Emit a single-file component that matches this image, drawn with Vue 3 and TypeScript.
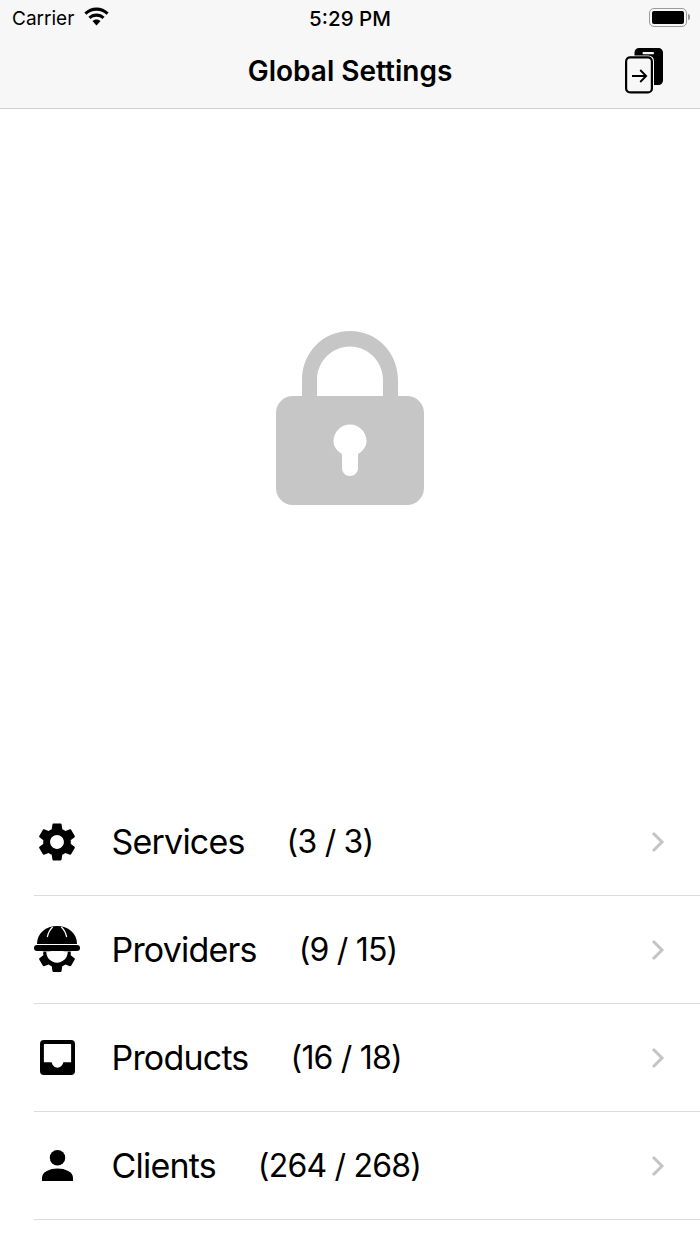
<template>
  <div class="page">
    <header class="topbar">
      <div class="status">
        <div class="status-left">
          <span>Carrier</span>
          <svg class="wifi" viewBox="1 0 24 18" width="25" height="18.700">
            <path d="M13 3.600c3.700 0 7.100 1.400 9.700 3.800l2-2.100C21.500 2.300 17.400.5 13 .5S4.500 2.300 1.300 5.300l2 2.100C5.900 5 9.300 3.600 13 3.600z" />
            <path d="M13 9.300c2.200 0 4.200.8 5.700 2.200l2.100-2.100C18.700 7.500 16 6.300 13 6.300s-5.700 1.200-7.800 3.100l2.100 2.100c1.500-1.400 3.500-2.200 5.700-2.200z" />
            <path d="M13 12.100c-1.500 0-2.900.6-3.900 1.500L13 17.700l3.900-4.100c-1-.9-2.400-1.500-3.900-1.500z" />
          </svg>
        </div>
        <span class="clock">5:29 PM</span>
        <div class="battery">
          <span class="battery-shell"><span class="battery-fill"></span></span>
          <span class="battery-tip"></span>
        </div>
      </div>
      <div class="navbar">
        <h1>Global Settings</h1>
        <svg class="switch-icon" viewBox="0 0 38 46" width="38" height="46">
          <path d="M14 0h19.500A4.500 4.500 0 0 1 38 4.500v28a4.500 4.500 0 0 1-4.500 4.500H29V13a5.500 5.500 0 0 0-5.500-5.500H9.500V4.500A4.500 4.500 0 0 1 14 0z" />
          <rect x="17.500" y="4" width="11.500" height="2.200" rx="1" fill="#f7f7f7" />
          <rect x="1.100" y="9.400" width="25.800" height="35" rx="4" fill="#f7f7f7" stroke="#000" stroke-width="2.200" />
          <path d="M7 28h14M15.200 22l6 6-6 6" fill="none" stroke="#000" stroke-width="1.800" />
        </svg>
      </div>
    </header>

    <section class="hero">
      <svg viewBox="0 0 148 174" width="148" height="174">
        <path
          fill-rule="evenodd"
          d="M26 65V49C26 21.500 47 0 74 0s48 21.500 48 49v16h9c9.500 0 17 7.500 17 17v75c0 9.500-7.500 17-17 17H17c-9.500 0-17-7.500-17-17V82c0-9.500 7.500-17 17-17h9zm15 0h66V49c0-18.500-14.800-33.500-33-33.500S41 30.500 41 49v16zM66 123v14c0 4.500 3.500 8 8 8s8-3.500 8-8v-14c5-3 8.500-7.500 8.500-13 0-9-7.500-16.500-16.500-16.500S57.500 101 57.500 110c0 5.500 3.500 10 8.500 13z"
        />
      </svg>
    </section>

    <ul class="menu">
      <li v-for="row in rows" :key="row.label" class="row">
        <span class="row-icon">
          <svg v-if="row.icon === 'gear'" viewBox="0 0 24 24" width="46" height="46">
            <path :d="gearPath" />
          </svg>
          <svg v-else-if="row.icon === 'worker'" viewBox="0 0 46 48" width="46" height="48">
            <clipPath id="gear-half"><rect x="0" y="25.500" width="46" height="23" /></clipPath>
            <g clip-path="url(#gear-half)">
              <path :d="gearPath" transform="translate(0 4.500) scale(1.917)" />
              <circle cx="23" cy="26" r="10.700" fill="#fff" />
            </g>
            <path d="M3 18C3 7 12 0 23 0s20 7 20 18z" />
            <path d="M13.300 11C14.300 6.500 16 3.500 18.700 1M32.700 11C31.700 6.500 30 3.500 27.300 1" fill="none" stroke="#fff" stroke-width="1.200" />
            <rect x="0" y="19" width="46" height="6" rx="3" />
          </svg>
          <svg v-else-if="row.icon === 'inbox'" viewBox="0 0 36 36" width="35" height="35">
            <path fill-rule="evenodd" d="M4 0h28a4 4 0 0 1 4 4v28a4 4 0 0 1-4 4H4a4 4 0 0 1-4-4V4a4 4 0 0 1 4-4zm.5 4a.5.5 0 0 0-.5.5V23h8c.5 3 3 5.500 6 5.500s5.500-2.500 6-5.500h8V4.500a.5.500 0 0 0-.5-.5z" />
          </svg>
          <svg v-else viewBox="0 0 32 32" width="31" height="31">
            <circle cx="16" cy="8" r="8" />
            <path d="M0 32v-3.500C0 22.500 8 19 16 19s16 3.500 16 9.500V32z" />
          </svg>
        </span>
        <span class="label">{{ row.label }}</span>
        <span class="count">{{ row.count }}</span>
        <svg class="chevron" viewBox="0 0 14 22" width="14" height="22">
          <path d="M2 2l9 9-9 9" fill="none" stroke="#c4c4c6" stroke-width="3" />
        </svg>
      </li>
    </ul>
  </div>
</template>

<script setup lang="ts">
type Row = { label: string; count: string; icon: 'gear' | 'worker' | 'inbox' | 'person' }

const gearPath =
  'M19.140 12.940c.04-.3.06-.61.06-.94 0-.32-.02-.64-.07-.94l2.030-1.580c.18-.14.23-.41.12-.61l-1.920-3.320c-.12-.22-.37-.29-.59-.22l-2.390.96c-.5-.38-1.030-.7-1.620-.94l-.36-2.540c-.04-.24-.24-.41-.48-.41h-3.840c-.24 0-.43.17-.47.41l-.36 2.540c-.59.24-1.130.57-1.620.94l-2.390-.96c-.22-.08-.47 0-.59.22L2.740 8.870c-.12.21-.08.47.12.61l2.030 1.580c-.05.3-.09.63-.09.94s.02.64.07.94l-2.030 1.580c-.18.14-.23.41-.12.61l1.920 3.320c.12.22.37.29.59.22l2.390-.96c.5.38 1.030.7 1.620.94l.36 2.540c.05.24.24.41.48.41h3.840c.24 0 .44-.17.47-.41l.36-2.540c.59-.24 1.130-.56 1.620-.94l2.390.96c.22.08.47 0 .59-.22l1.920-3.320c.12-.22.07-.47-.12-.61l-2.010-1.580zM12 15.600c-1.980 0-3.600-1.620-3.600-3.600s1.620-3.600 3.600-3.600 3.600 1.620 3.600 3.600-1.620 3.600-3.600 3.600z'

const rows: Row[] = [
  { label: 'Services', count: '(3 / 3)', icon: 'gear' },
  { label: 'Providers', count: '(9 / 15)', icon: 'worker' },
  { label: 'Products', count: '(16 / 18)', icon: 'inbox' },
  { label: 'Clients', count: '(264 / 268)', icon: 'person' }
]
</script>

<style>
html,
body {
  background: #fff;
}
</style>

<style scoped>
.page {
  width: 700px;
  height: 1244px;
  overflow: hidden;
  display: flex;
  flex-direction: column;
  background: #fff;
  color: #000;
  font-family: Inter, "Liberation Sans", sans-serif;
}

.topbar {
  height: 109px;
  box-sizing: border-box;
  background: #f7f7f7;
  border-bottom: 1px solid #cfcfcf;
}

.status {
  height: 36px;
  padding: 0 10px 0 12px;
  display: flex;
  align-items: center;
  justify-content: space-between;
  position: relative;
}

.status-left {
  display: flex;
  align-items: center;
  gap: 10px;
  font-size: 19px;
}

.wifi {
  display: block;
  margin-top: -3px;
}

.clock {
  position: absolute;
  left: 0;
  right: 0;
  text-align: center;
  font-size: 20.500px;
  font-weight: 500;
}

.battery {
  display: flex;
  align-items: center;
  gap: 1px;
  margin-top: -2px;
}

.battery-shell {
  width: 38px;
  height: 19px;
  box-sizing: border-box;
  border: 1.500px solid #9a9a9a;
  border-radius: 5px;
  padding: 2px;
  display: block;
}

.battery-fill {
  display: block;
  height: 100%;
  background: #000;
  border-radius: 2px;
}

.battery-tip {
  width: 2px;
  height: 6px;
  background: #9a9a9a;
  border-radius: 0 2px 2px 0;
}

.navbar {
  height: 70px;
  display: flex;
  align-items: center;
  justify-content: center;
  position: relative;
}

.navbar h1 {
  margin: 0;
  font-size: 28px;
  font-weight: 600;
}

.switch-icon {
  position: absolute;
  right: 37px;
  top: 12px;
}

.hero {
  height: 679px;
  box-sizing: border-box;
  padding-top: 222px;
  display: flex;
  justify-content: center;
  align-items: flex-start;
}

.hero svg {
  display: block;
  fill: #c6c6c7;
}

.menu {
  list-style: none;
  margin: 0 0 0 34px;
  padding: 0;
}

.row {
  height: 108px;
  box-sizing: border-box;
  border-bottom: 1px solid #dcdcdc;
  display: flex;
  align-items: center;
  padding-right: 35px;
  font-size: 34px;
  letter-spacing: -0.8px;
}

.row-icon {
  width: 46px;
  margin-right: 31.500px;
  display: flex;
  justify-content: center;
  align-items: center;
}

.row-icon svg {
  display: block;
}

.count {
  margin-left: 42px;
  font-size: 32px;
}

.chevron {
  margin-left: auto;
  display: block;
}
</style>
